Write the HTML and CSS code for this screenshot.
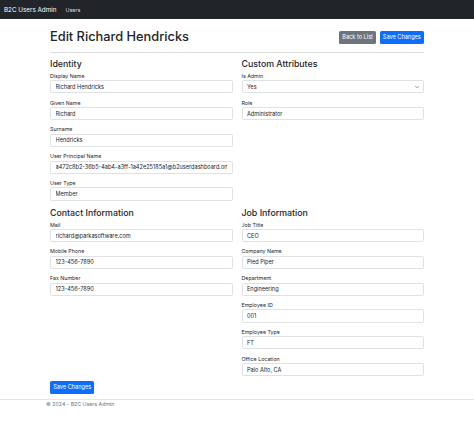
FILE: index.html
```html
<!DOCTYPE html>
<html lang="en">
<head>
<meta charset="utf-8">
<title>Edit Richard Hendricks - B2C Users Admin</title>
<link rel="stylesheet" href="styles.css">
</head>
<body>
<nav class="navbar">
  <a class="brand" href="#">B2C Users Admin</a>
  <a class="nav-link" href="#">Users</a>
</nav>
<main class="container">
  <div class="page-header">
    <h1 class="title">Edit Richard Hendricks</h1>
    <div class="actions">
      <button type="button" class="btn btn-secondary">Back to List</button>
      <button type="button" class="btn btn-primary">Save Changes</button>
    </div>
  </div>
  <hr class="divider">
  <form class="form">
    <div class="grid">
      <section class="section">
        <h4 class="section-title">Identity</h4>
        <div class="fields">
          <div class="field"><label class="label">Display Name</label><input class="control" value="Richard Hendricks"></div>
          <div class="field"><label class="label">Given Name</label><input class="control" value="Richard"></div>
          <div class="field"><label class="label">Surname</label><input class="control" value="Hendricks"></div>
          <div class="field"><label class="label">User Principal Name</label><input class="control" value="a472c8b2-36b5-4ab4-a3ff-1a42e25185a1@b2userdashboard.onmicrosoft.com"></div>
          <div class="field"><label class="label">User Type</label><input class="control" value="Member"></div>
        </div>
      </section>
      <section class="section">
        <h4 class="section-title">Custom Attributes</h4>
        <div class="fields">
          <div class="field"><label class="label">Is Admin</label>
            <div class="select-wrap">
              <select class="control select"><option>Yes</option><option>No</option></select>
              <svg class="chevron" viewBox="0 0 16 16" aria-hidden="true"><path d="M2 5l6 6 6-6" fill="none" stroke="#343a40" stroke-width="2" stroke-linecap="round" stroke-linejoin="round"/></svg>
            </div>
          </div>
          <div class="field"><label class="label">Role</label><input class="control" value="Administrator"></div>
        </div>
      </section>
      <section class="section">
        <h4 class="section-title">Contact Information</h4>
        <div class="fields">
          <div class="field"><label class="label">Mail</label><input class="control" value="richard@parkasoftware.com"></div>
          <div class="field"><label class="label">Mobile Phone</label><input class="control" value="123-456-7890"></div>
          <div class="field"><label class="label">Fax Number</label><input class="control" value="123-456-7890"></div>
        </div>
      </section>
      <section class="section">
        <h4 class="section-title">Job Information</h4>
        <div class="fields">
          <div class="field"><label class="label">Job Title</label><input class="control" value="CEO"></div>
          <div class="field"><label class="label">Company Name</label><input class="control" value="Pied Piper"></div>
          <div class="field"><label class="label">Department</label><input class="control" value="Engineering"></div>
          <div class="field"><label class="label">Employee ID</label><input class="control" value="001"></div>
          <div class="field"><label class="label">Employee Type</label><input class="control" value="FT"></div>
          <div class="field"><label class="label">Office Location</label><input class="control" value="Palo Alto, CA"></div>
        </div>
      </section>
    </div>
    <div class="form-actions">
      <button type="submit" class="btn btn-primary">Save Changes</button>
    </div>
  </form>
</main>
<footer class="footer">
  <div class="footer-inner">&copy; 2024 - B2C Users Admin</div>
</footer>
</body>
</html>
```

FILE: styles.css
```css
* { box-sizing: border-box; }
html, body { margin: 0; padding: 0; }
body {
  font-family: Inter, "Liberation Sans", sans-serif;
  color: #212529;
  background: #fff;
}
.navbar {
  height: 19px;
  background: #212529;
  display: flex;
  align-items: center;
  padding-left: 4px;
  gap: 9px;
}
.brand {
  color: #fff;
  font-size: 6.3px;
  text-decoration: none;
}
.nav-link {
  color: rgba(255, 255, 255, 0.85);
  font-size: 5.4px;
  text-decoration: none;
}
.container {
  width: 374px;
  margin: 0 auto;
}
.page-header {
  display: flex;
  justify-content: space-between;
  align-items: flex-start;
  margin-top: 6.6px;
}
.title {
  margin: 0;
  font-size: 12.8px;
  font-weight: 500;
  line-height: 21.3px;
}
.actions {
  display: flex;
  gap: 3.5px;
  margin-top: 5px;
}
.btn {
  height: 13.2px;
  padding: 0 3.2px;
  font-family: inherit;
  font-size: 5.6px;
  line-height: 13.2px;
  border: 0;
  border-radius: 1.6px;
  color: #fff;
}
.btn-primary { background: #0d6efd; }
.btn-secondary { background: #6c757d; }
.divider {
  border: 0;
  border-top: 1px solid #dcdddf;
  margin: 5.4px 0 0;
}
.grid {
  display: grid;
  grid-template-columns: 182.5px 182.5px;
  column-gap: 9px;
  row-gap: 6.2px;
  margin-top: 4.7px;
}
.section-title {
  margin: 0 0 3.1px;
  font-size: 8.8px;
  font-weight: 500;
  line-height: 11.8px;
}
.fields {
  display: flex;
  flex-direction: column;
  gap: 6.2px;
}
.label {
  display: block;
  font-size: 5.3px;
  line-height: 7.4px;
}
.control {
  display: block;
  width: 100%;
  height: 13.2px;
  padding: 0 4.5px;
  font-family: inherit;
  font-size: 5.6px;
  color: #212529;
  background: #fff;
  border: 1px solid #dee2e6;
  border-radius: 1.5px;
  outline: none;
}
.select-wrap { position: relative; }
.select {
  appearance: none;
  -webkit-appearance: none;
}
.chevron {
  position: absolute;
  right: 5.5px;
  top: 5px;
  width: 4px;
  height: 4px;
  pointer-events: none;
}
.form-actions {
  display: flex;
  margin-top: 5px;
}
.footer {
  margin-top: 5px;
  border-top: 1px solid #e3e5e8;
}
.footer-inner {
  width: 382px;
  margin: 0 auto;
  font-size: 5.25px;
  line-height: 6px;
  padding-top: 0.3px;
  color: #6c757d;
}
```
